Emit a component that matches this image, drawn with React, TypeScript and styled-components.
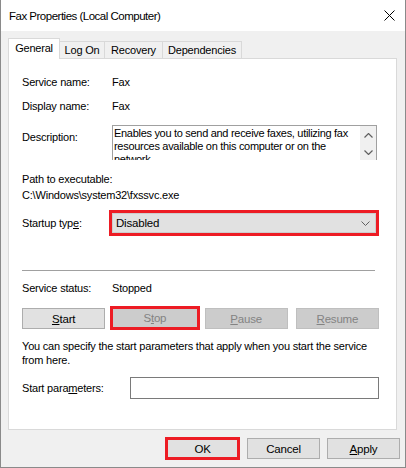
import React from "react";
import styled, { createGlobalStyle } from "styled-components";

const GlobalStyle = createGlobalStyle`
  html, body {
    margin: 0;
    padding: 0;
    background: #ffffff;
  }
  body {
    font-family: "Liberation Sans", Arial, sans-serif;
    font-size: 11px;
    letter-spacing: -0.2px;
    color: #000000;
  }
`;

const Window = styled.div`
  width: 406px;
  height: 468px;
  box-sizing: border-box;
  border: 1px solid #8a8a8a;
  border-top: none;
  background: #f0f0f0;
  display: flex;
  flex-direction: column;
`;

const TitleBar = styled.div`
  height: 31px;
  background: #ffffff;
  display: flex;
  align-items: center;
  justify-content: space-between;
  padding: 0 9px 0 8px;
  font-size: 11.5px;
  letter-spacing: -0.5px;
`;

const CloseIcon = styled.svg`
  width: 11px;
  height: 11px;
  margin-right: 1px;
  margin-top: -1px;
`;

const Body = styled.div`
  padding: 7px 7px 0 7px;
  display: flex;
  flex-direction: column;
`;

const TabStrip = styled.div`
  display: flex;
  align-items: flex-end;
  height: 20px;
  position: relative;
  z-index: 1;
`;

const Tab = styled.div<{ $active?: boolean; $w: number }>`
  box-sizing: border-box;
  width: ${(p) => p.$w}px;
  height: ${(p) => (p.$active ? "21px" : "17px")};
  margin-bottom: ${(p) => (p.$active ? "-1px" : "0")};
  padding-top: ${(p) => (p.$active ? "2px" : "1px")};
  background: ${(p) => (p.$active ? "#ffffff" : "#f0f0f0")};
  border: 1px solid #d9d9d9;
  border-bottom: none;
  border-left-width: ${(p) => (p.$active ? "1px" : "0")};
  line-height: 14px;
  text-align: center;
  white-space: nowrap;
`;

const Panel = styled.div`
  box-sizing: border-box;
  width: 389px;
  height: 372px;
  background: #ffffff;
  border: 1px solid #d9d9d9;
  padding: 15px 17px 0 13px;
  display: flex;
  flex-direction: column;
`;

const Row = styled.div<{ $mt?: number; $h?: number }>`
  display: flex;
  align-items: center;
  margin-top: ${(p) => p.$mt ?? 0}px;
  min-height: ${(p) => p.$h ?? 16}px;
  line-height: 16px;
`;

const Label = styled.div<{ $w?: number }>`
  width: ${(p) => p.$w ?? 90}px;
  flex-shrink: 0;
`;

const DescRow = styled.div`
  display: flex;
  align-items: flex-start;
  margin-top: 11px;
`;

const DescLabel = styled(Label)`
  padding-top: 4px;
  line-height: 16px;
`;

const DescBox = styled.div`
  box-sizing: border-box;
  width: 265px;
  height: 35px;
  border: 1px solid #a0a0a0;
  border-bottom: none;
  display: flex;
  overflow: hidden;
`;

const DescText = styled.div`
  flex: 1;
  padding: 1px 1px 0 1px;
  line-height: 13px;
  letter-spacing: -0.3px;
`;

const ScrollBar = styled.div`
  width: 16px;
  background: #f0f0f0;
  display: flex;
  flex-direction: column;
  align-items: center;
  justify-content: space-between;
  padding: 7px 0 5px;
`;

const Arrow = styled.svg`
  width: 9px;
  height: 5px;
`;

const Block = styled.div<{ $mt?: number }>`
  margin-top: ${(p) => p.$mt ?? 0}px;
  line-height: 16px;
`;

const Combo = styled.div`
  box-sizing: border-box;
  width: 271px;
  height: 26px;
  margin-left: -3px;
  border: 3px solid #ed1c24;
  background: #e1e1e1;
  box-shadow: inset 0 0 0 1px #cdcdcd;
  display: flex;
  align-items: center;
  justify-content: space-between;
  padding: 0 6px 0 4px;
  font-size: 11.5px;
`;

const Chevron = styled.svg`
  width: 9px;
  height: 5px;
`;

const Separator = styled.div`
  height: 1px;
  width: 353px;
  background: #a0a0a0;
  margin-top: 34px;
`;

const ButtonRow = styled.div`
  display: grid;
  grid-template-columns: repeat(4, 1fr);
  column-gap: 8px;
  align-items: center;
  margin-top: 11px;
  height: 21px;
`;

const Button = styled.div<{ $disabled?: boolean; $marked?: boolean }>`
  box-sizing: border-box;
  height: ${(p) => (p.$marked ? "24px" : "21px")};
  margin: ${(p) => (p.$marked ? "-1px -3px 0" : "0")};
  background: ${(p) => (p.$disabled ? "#cccccc" : "#e1e1e1")};
  border: ${(p) =>
    p.$marked ? "3px solid #ed1c24" : p.$disabled ? "1px solid #bfbfbf" : "1px solid #adadad"};
  color: ${(p) => (p.$disabled ? "#838383" : "#000000")};
  display: flex;
  align-items: center;
  justify-content: center;
  font-size: 11.5px;
`;

const Para = styled.div`
  margin-top: 11px;
  line-height: 14px;
  padding-right: 4px;
`;

const ParamRow = styled.div`
  display: flex;
  align-items: center;
  margin-top: 10px;
  height: 22px;
`;

const ParamInput = styled.div`
  box-sizing: border-box;
  width: 249px;
  height: 22px;
  border: 1px solid #7a7a7a;
  background: #ffffff;
`;

const Footer = styled.div`
  display: flex;
  justify-content: flex-end;
  gap: 7px;
  margin-top: 7px;
  margin-right: -2px;
`;

const DialogButton = styled.div<{ $marked?: boolean; $w?: number }>`
  box-sizing: border-box;
  width: ${(p) => p.$w ?? 73}px;
  height: ${(p) => (p.$marked ? "23px" : "21px")};
  margin-top: ${(p) => (p.$marked ? "0" : "1px")};
  background: #e1e1e1;
  border: ${(p) => (p.$marked ? "3px solid #ed1c24" : "1px solid #adadad")};
  display: flex;
  align-items: center;
  justify-content: center;
  font-size: 11.5px;
`;

export default function App() {
  return (
    <>
      <GlobalStyle />
      <Window>
        <TitleBar>
          <span>Fax Properties (Local Computer)</span>
          <CloseIcon viewBox="0 0 11 11">
            <path d="M0.5 0.5 L10.5 10.5 M10.5 0.5 L0.5 10.5" stroke="#000" strokeWidth="1" fill="none" />
          </CloseIcon>
        </TitleBar>
        <Body>
          <TabStrip>
            <Tab $active $w={52}>General</Tab>
            <Tab $w={45}>Log On</Tab>
            <Tab $w={58}>Recovery</Tab>
            <Tab $w={79}>Dependencies</Tab>
          </TabStrip>
          <Panel>
            <Row>
              <Label>Service name:</Label>
              <span>Fax</span>
            </Row>
            <Row $mt={8}>
              <Label>Display name:</Label>
              <span>Fax</span>
            </Row>
            <DescRow>
              <DescLabel>Description:</DescLabel>
              <DescBox>
                <DescText>
                  Enables you to send and receive faxes, utilizing fax resources available on this
                  computer or on the network
                </DescText>
                <ScrollBar>
                  <Arrow viewBox="0 0 9 5">
                    <path d="M0.5 4.5 L4.5 0.5 L8.5 4.5" stroke="#606060" strokeWidth="1.2" fill="none" />
                  </Arrow>
                  <Arrow viewBox="0 0 9 5">
                    <path d="M0.5 0.5 L4.5 4.5 L8.5 0.5" stroke="#606060" strokeWidth="1.2" fill="none" />
                  </Arrow>
                </ScrollBar>
              </DescBox>
            </DescRow>
            <Block $mt={11}>Path to executable:</Block>
            <Block>C:\Windows\system32\fxssvc.exe</Block>
            <Row $mt={7} $h={26}>
              <Label>
                Startup typ<u>e</u>:
              </Label>
              <Combo>
                <span>Disabled</span>
                <Chevron viewBox="0 0 9 5">
                  <path d="M0.5 0.5 L4.5 4.5 L8.5 0.5" stroke="#606060" strokeWidth="1" fill="none" />
                </Chevron>
              </Combo>
            </Row>
            <Separator />
            <Row $mt={9}>
              <Label>Service status:</Label>
              <span>Stopped</span>
            </Row>
            <ButtonRow>
              <Button>
                <span>
                  <u>S</u>tart
                </span>
              </Button>
              <Button $disabled $marked>
                <span>
                  S<u>t</u>op
                </span>
              </Button>
              <Button $disabled>
                <span>
                  <u>P</u>ause
                </span>
              </Button>
              <Button $disabled>
                <span>
                  <u>R</u>esume
                </span>
              </Button>
            </ButtonRow>
            <Para>
              You can specify the start parameters that apply when you start the service from here.
            </Para>
            <ParamRow>
              <Label $w={108}>
                Start para<u>m</u>eters:
              </Label>
              <ParamInput />
            </ParamRow>
          </Panel>
          <Footer>
            <DialogButton $marked $w={75}>
              OK
            </DialogButton>
            <DialogButton>Cancel</DialogButton>
            <DialogButton>
              <span>
                <u>A</u>pply
              </span>
            </DialogButton>
          </Footer>
        </Body>
      </Window>
    </>
  );
}
